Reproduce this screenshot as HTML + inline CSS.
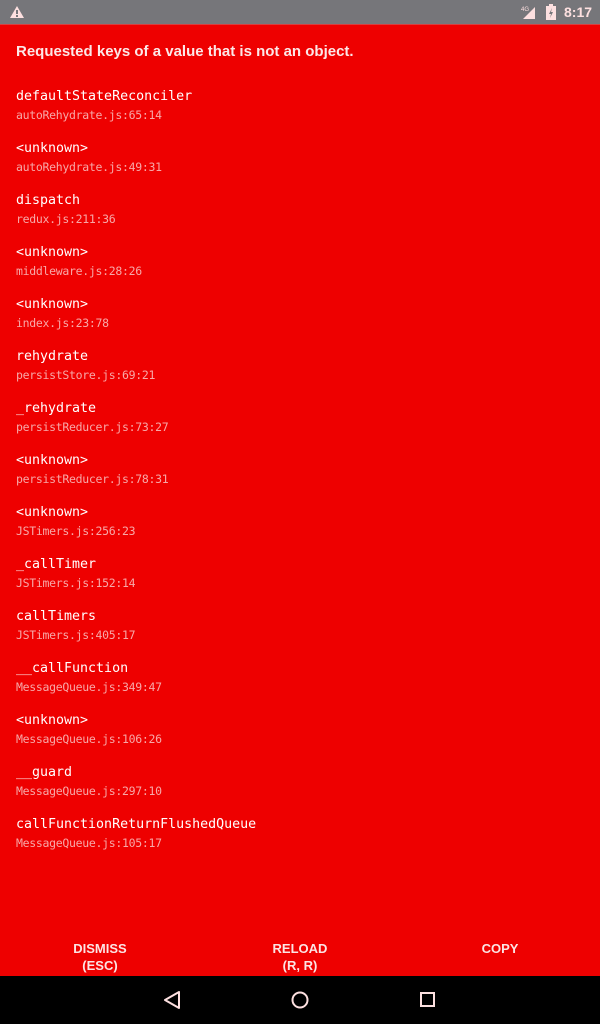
<!DOCTYPE html>
<html><head><style>
body{margin:0;width:600px;height:1024px;background:#ee0000;position:relative;overflow:hidden;font-family:"Liberation Sans",sans-serif;color:#fff}
.sb{position:absolute;top:0;left:0;width:600px;height:24px;background:#76767a;border-bottom:1px solid #d84040}
.title{position:absolute;left:16px;top:43px;font-size:15px;font-weight:bold;color:#fce8e8}
.e{position:absolute;left:16px;font-family:"DejaVu Sans Mono","Liberation Mono",monospace}
.n{font-size:13.3px;color:#fff;line-height:16px}
.f{font-size:11.5px;color:#f7a8a8;line-height:14px;margin-top:3px;letter-spacing:-0.3px}
.btn{position:absolute;top:940px;font-size:13px;text-align:center;line-height:17px;color:#fce4e4;font-weight:bold}
.nav{position:absolute;top:976px;left:0;width:600px;height:48px;background:#000}
</style></head><body>
<div class="sb">
<svg style="position:absolute;left:9px;top:5px" width="16" height="14"><path d="M8 1L15 13H1Z" fill="#fde0e0"/><rect x="7" y="5" width="2" height="4" fill="#76767a"/><rect x="7" y="10" width="2" height="2" fill="#76767a"/></svg>
<svg style="position:absolute;left:521px;top:5px" width="20" height="15"><text x="0" y="6" font-size="6" fill="#fde0e0" font-family="Liberation Sans">4G</text><path d="M14 2V14H2Z" fill="#fde0e0"/></svg>
<svg style="position:absolute;left:546px;top:4px" width="10" height="16"><rect x="0" y="2" width="10" height="14" fill="#fde0e0"/><rect x="3" y="0" width="4" height="2" fill="#fde0e0"/><path d="M6 4L3 10H5L4 14L7 8H5Z" fill="#76767a"/></svg>
<div style="position:absolute;left:564px;top:4px;font-size:14px;font-weight:bold;color:#fde0e0">8:17</div>
</div>
<div class="title">Requested keys of a value that is not an object.</div>
<div class="e" style="top:89px"><div class="n">defaultStateReconciler</div><div class="f">autoRehydrate.js:65:14</div></div>
<div class="e" style="top:141px"><div class="n">&lt;unknown&gt;</div><div class="f">autoRehydrate.js:49:31</div></div>
<div class="e" style="top:193px"><div class="n">dispatch</div><div class="f">redux.js:211:36</div></div>
<div class="e" style="top:245px"><div class="n">&lt;unknown&gt;</div><div class="f">middleware.js:28:26</div></div>
<div class="e" style="top:297px"><div class="n">&lt;unknown&gt;</div><div class="f">index.js:23:78</div></div>
<div class="e" style="top:349px"><div class="n">rehydrate</div><div class="f">persistStore.js:69:21</div></div>
<div class="e" style="top:401px"><div class="n">_rehydrate</div><div class="f">persistReducer.js:73:27</div></div>
<div class="e" style="top:453px"><div class="n">&lt;unknown&gt;</div><div class="f">persistReducer.js:78:31</div></div>
<div class="e" style="top:505px"><div class="n">&lt;unknown&gt;</div><div class="f">JSTimers.js:256:23</div></div>
<div class="e" style="top:557px"><div class="n">_callTimer</div><div class="f">JSTimers.js:152:14</div></div>
<div class="e" style="top:609px"><div class="n">callTimers</div><div class="f">JSTimers.js:405:17</div></div>
<div class="e" style="top:661px"><div class="n">__callFunction</div><div class="f">MessageQueue.js:349:47</div></div>
<div class="e" style="top:713px"><div class="n">&lt;unknown&gt;</div><div class="f">MessageQueue.js:106:26</div></div>
<div class="e" style="top:765px"><div class="n">__guard</div><div class="f">MessageQueue.js:297:10</div></div>
<div class="e" style="top:817px"><div class="n">callFunctionReturnFlushedQueue</div><div class="f">MessageQueue.js:105:17</div></div>
<div class="btn" style="left:50px;width:100px">DISMISS<br>(ESC)</div>
<div class="btn" style="left:250px;width:100px">RELOAD<br>(R, R)</div>
<div class="btn" style="left:450px;width:100px">COPY</div>
<div class="nav">
<svg style="position:absolute;left:163px;top:15px" width="18" height="18"><path d="M16 1V17L2 9Z" fill="none" stroke="#fde0e0" stroke-width="2" stroke-linejoin="round"/></svg>
<svg style="position:absolute;left:290px;top:15px" width="20" height="20"><circle cx="10" cy="9" r="7.5" fill="none" stroke="#fde0e0" stroke-width="2"/></svg>
<svg style="position:absolute;left:420px;top:16px" width="16" height="16"><rect x="1" y="1" width="13" height="13" fill="none" stroke="#fde0e0" stroke-width="2"/></svg>
</div>
</body></html>
